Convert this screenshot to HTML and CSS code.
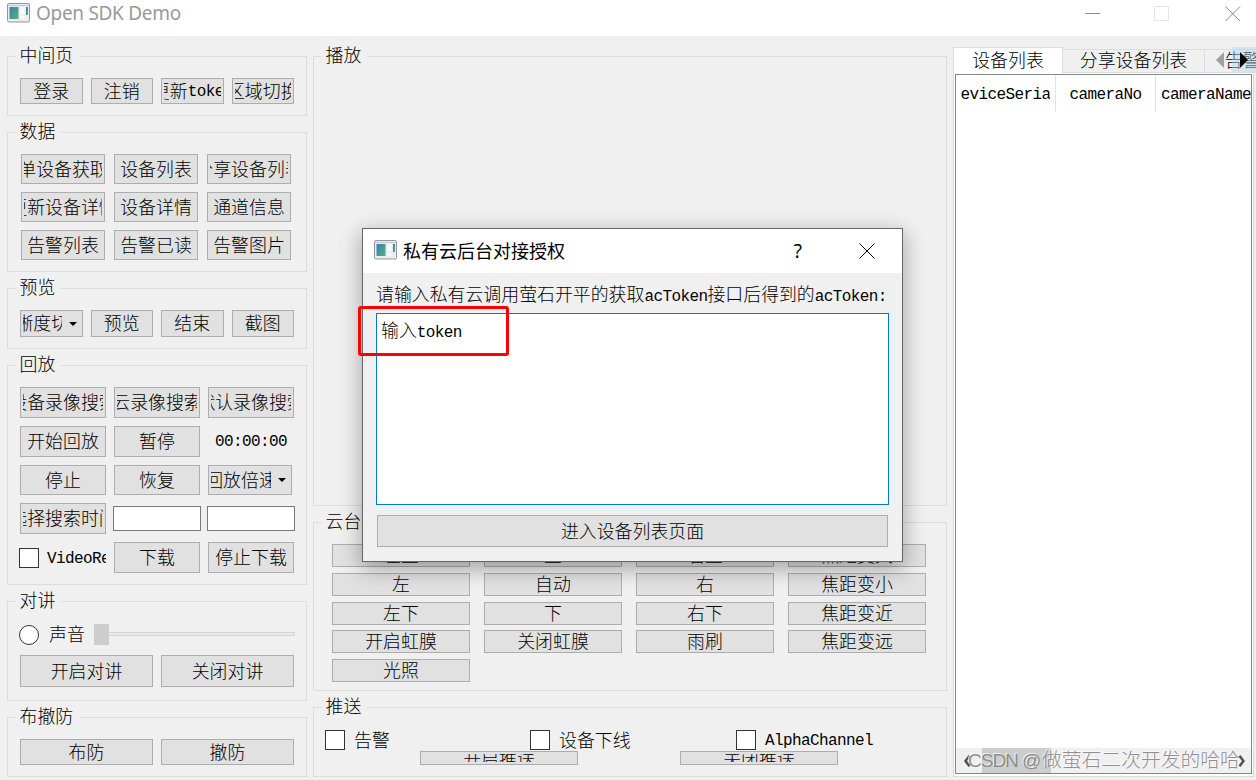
FILE: index.html
```html
<!DOCTYPE html>
<html lang="zh-CN">
<head>
    <meta charset="UTF-8">
    <title>Open SDK Demo</title>
    <link rel="stylesheet" href="styles.css">
</head>
<body>
<!-- 标题栏 -->
<div class="titlebar">
    <svg class="app-icon" width="23" height="20" viewBox="0 0 23 20">
        <defs>
            <linearGradient id="scr" x1="0" y1="0" x2="1" y2="1">
                <stop offset="0" stop-color="#3d7fae"/>
                <stop offset="1" stop-color="#56b07c"/>
            </linearGradient>
        </defs>
        <rect x="0.5" y="0.5" width="22" height="18.5" rx="1.5" fill="#e9ecf0" stroke="#8f969f"/>
        <path d="M1.5 2.5h20" stroke="#c4c9d0"/>
        <rect x="2.5" y="4" width="9" height="12" fill="url(#scr)"/>
        <rect x="13.5" y="4" width="4" height="7" fill="#fafafa"/>
        <rect x="13.5" y="12.5" width="4" height="3.5" fill="#f8f8f8"/>
        <rect x="19" y="4" width="2" height="8" fill="url(#scr)"/>
    </svg>
    <span class="app-name">Open SDK Demo</span>
    <svg class="win-btns" width="156" height="16" viewBox="0 0 156 16">
        <path d="M0 7.5h15" stroke="#8c8c8c" fill="none"/>
        <rect x="69.5" y="0.5" width="14" height="14" stroke="#e6e6e6" fill="none"/>
        <path d="M140.500 0.500l14.500 14.500M155 0.500L140.500 15" stroke="#8c8c8c" fill="none"/>
    </svg>
</div>

<div class="main">
    <!-- 左侧功能区 -->
    <div class="left">
        <div class="group h60">
            <div class="title">中间页</div>
            <div class="row4">
                <div class="btn">登录</div>
                <div class="btn">注销</div>
                <div class="btn">更新<span class="en">token</span></div>
                <div class="btn">区域切换</div>
            </div>
        </div>
        <div class="group h140">
            <div class="title">数据</div>
            <div class="data">
                <div class="btn">单设备获取</div>
                <div class="btn">设备列表</div>
                <div class="btn">分享设备列表</div>
                <div class="btn">更新设备详情</div>
                <div class="btn">设备详情</div>
                <div class="btn">通道信息</div>
                <div class="btn">告警列表</div>
                <div class="btn">告警已读</div>
                <div class="btn">告警图片</div>
            </div>
        </div>
        <div class="group h61">
            <div class="title">预览</div>
            <div class="row4 preview">
                <div class="combo"><div class="text">清晰度切换</div><i class="arrow"></i></div>
                <div class="btn">预览</div>
                <div class="btn">结束</div>
                <div class="btn">截图</div>
            </div>
        </div>
        <div class="group h220">
            <div class="title">回放</div>
            <div class="playback">
                <div class="btn">设备录像搜索</div>
                <div class="btn">云录像搜索</div>
                <div class="btn">默认录像搜索</div>
                <div class="btn">开始回放</div>
                <div class="btn">暂停</div>
                <div class="time en">00:00:00</div>
                <div class="btn">停止</div>
                <div class="btn">恢复</div>
                <div class="combo speed"><div class="text">回放倍速</div><i class="arrow"></i></div>
                <div class="btn">选择搜索时间</div>
                <div class="edit"></div>
                <div class="edit"></div>
                <div class="check"><i class="box"></i><span class="en">VideoRecord</span></div>
                <div class="btn">下载</div>
                <div class="btn">停止下载</div>
            </div>
        </div>
        <div class="group h100">
            <div class="title">对讲</div>
            <div class="voice">
                <i class="radio"></i>
                <span class="voice-name">声音</span>
                <i class="handle"></i>
                <i class="track"></i>
            </div>
            <div class="row2 talk">
                <div class="btn">开启对讲</div>
                <div class="btn">关闭对讲</div>
            </div>
        </div>
        <div class="group h60">
            <div class="title">布撤防</div>
            <div class="row2">
                <div class="btn">布防</div>
                <div class="btn">撤防</div>
            </div>
        </div>
    </div>

    <!-- 中间播放区 -->
    <div class="center">
        <div class="group h450">
            <div class="title">播放</div>
        </div>
        <div class="group h169">
            <div class="title">云台控制</div>
            <div class="ptz">
                <div class="btn">左上</div>
                <div class="btn">上</div>
                <div class="btn">右上</div>
                <div class="btn">焦距变大</div>
                <div class="btn">左</div>
                <div class="btn">自动</div>
                <div class="btn">右</div>
                <div class="btn">焦距变小</div>
                <div class="btn">左下</div>
                <div class="btn">下</div>
                <div class="btn">右下</div>
                <div class="btn">焦距变近</div>
                <div class="btn">开启虹膜</div>
                <div class="btn">关闭虹膜</div>
                <div class="btn">雨刷</div>
                <div class="btn">焦距变远</div>
                <div class="btn">光照</div>
            </div>
        </div>
        <div class="group h70">
            <div class="title">推送</div>
            <div class="push-checks">
                <div class="check"><i class="box"></i><span>告警</span></div>
                <div class="check"><i class="box"></i><span>设备下线</span></div>
                <div class="check"><i class="box"></i><span class="en">AlphaChannel</span></div>
            </div>
            <div class="push-btns">
                <div class="btn">开启推送</div>
                <div class="btn">关闭推送</div>
            </div>
        </div>
    </div>

    <!-- 右侧列表 -->
    <div class="right">
        <div class="tabs">
            <div class="tab select">设备列表</div>
            <div class="tab tab2">分享设备列表</div>
            <div class="tab tab3">告警列表</div>
            <div class="scroller">
                <svg width="8" height="16" viewBox="0 0 8 16"><path d="M8 0v16L0 8z" fill="#a0a0a0"/></svg>
                <div class="next"><svg width="8" height="16" viewBox="0 0 8 16"><path d="M0 0v16L8 8z" fill="#000"/></svg></div>
            </div>
        </div>
        <div class="pane">
            <div class="table">
                <div class="thead">
                    <div class="th"><span class="en">deviceSerial</span></div>
                    <div class="th"><span class="en">cameraNo</span></div>
                    <div class="th"><span class="en">cameraName</span></div>
                </div>
                <div class="scrollbar">
                    <svg width="7" height="12" viewBox="0 0 7 12"><path d="M5.500 0.800L1.500 6l4 5.200" fill="none" stroke="#505050" stroke-width="2.500"/></svg>
                    <i class="thumb"></i>
                    <svg width="7" height="12" viewBox="0 0 7 12"><path d="M1.500 0.800L5.500 6l-4 5.200" fill="none" stroke="#505050" stroke-width="2.500"/></svg>
                    <div class="mark"><span class="mark-en">CSDN @</span>做萤石二次开发的哈哈</div>
                </div>
            </div>
        </div>
    </div>
</div>

<!-- 授权弹窗 -->
<div class="dialog">
    <div class="dialog-head">
        <svg class="app-icon" width="23" height="20" viewBox="0 0 23 20">
            <rect x="0.5" y="0.5" width="22" height="18.5" rx="1.5" fill="#e9ecf0" stroke="#8f969f"/>
            <path d="M1.500 2.500h20" stroke="#c4c9d0"/>
            <rect x="2.5" y="4" width="9" height="12" fill="url(#scr)"/>
            <rect x="13.5" y="4" width="4" height="7" fill="#fafafa"/>
            <rect x="13.5" y="12.5" width="4" height="3.5" fill="#f8f8f8"/>
            <rect x="19" y="4" width="2" height="8" fill="url(#scr)"/>
        </svg>
        <span class="dialog-name">私有云后台对接授权</span>
        <span class="help">?</span>
        <svg width="16" height="16" viewBox="0 0 16 16"><path d="M0.500 0.500l15 15M15.500 0.500l-15 15" stroke="#000" fill="none"/></svg>
    </div>
    <div class="dialog-body">
        <div class="tip">请输入私有云调用萤石开平的获取<span class="en">acToken</span>接口后得到的<span class="en">acToken:</span></div>
        <div class="input">输入<span class="en">token</span></div>
        <div class="btn enter">进入设备列表页面</div>
    </div>
</div>
<div class="redbox"></div>
</body>
</html>
```

FILE: styles.css
```css
* { margin: 0; padding: 0; box-sizing: border-box; }
body {
    width: 1256px;
    height: 780px;
    overflow: hidden;
    position: relative;
    background: #f0f0f0;
    color: #000;
    font: 300 17.9px/20px "Noto Sans CJK SC", sans-serif;
    white-space: nowrap;
}
i { font-style: normal; display: block; flex: none; }
svg { display: block; flex: none; }
.en {
    font-family: "Liberation Mono", monospace;
    font-size: 16px;
    font-weight: 400;
    line-height: 1;
    letter-spacing: -0.6px;
}

/* 标题栏 */
.titlebar {
    display: flex;
    height: 36px;
    padding: 3px 15px 0 7px;
    background: #fff;
}
.app-name {
    margin-left: 6px;
    line-height: 20px;
    font-family: "Noto Sans", sans-serif;
    font-size: 19px;
    letter-spacing: -0.3px;
    font-weight: 400;
    color: #999;
}
.win-btns { margin: 3px 0 0 auto; }

.main { display: flex; height: 744px; padding: 20px 0 0 7px; }
.left { width: 300px; }
.center { width: 634px; margin-left: 6px; }

/* 分组框 */
.group { border: 1px solid #dcdcdc; margin-bottom: 16px; padding: 0 12px; }
.title {
    width: max-content;
    height: 20px;
    margin: -11px 0 12px -5px;
    padding: 0 6px 0 4.5px;
    line-height: 17px;
    background: #f0f0f0;
}
.h60 { height: 60px; }
.h61 { height: 61px; }
.h70 { height: 70px; padding: 0 11px; }
.h100 { height: 100px; }
.h140 { height: 140px; }
.h169 { height: 169px; }
.h220 { height: 220px; }
.h450 { height: 450px; }
.h70 .title { margin-left: -4px; }

.btn {
    display: flex;
    align-items: center;
    justify-content: center;
    min-width: 0;
    min-height: 0;
    padding: 0 2px 3px;
    border: 1px solid #adadad;
    background: #e1e1e1;
    overflow: clip;
    overflow-clip-margin: content-box;
}
.btn .en { margin-top: 4px; }
.combo {
    display: flex;
    align-items: center;
    min-width: 0;
    padding: 0 5px 0 2px;
    border: 1px solid #adadad;
    background: #e1e1e1;
}
.combo .text {
    flex: 1;
    display: flex;
    justify-content: center;
    min-width: 0;
    margin: 0 7px 3px 0;
    overflow: hidden;
}
.arrow { border: 4px solid transparent; border-top-color: #000; border-bottom: 0; }

.row4 { display: grid; grid-template-columns: repeat(4, 62.5px); gap: 8px; height: 26px; }
.preview { height: 27px; }
.row2 { display: grid; grid-template-columns: 1fr 1fr; gap: 8px; height: 26px; }
.talk { height: 32px; }
.data {
    display: grid;
    grid-template-columns: repeat(3, 84px);
    grid-template-rows: repeat(3, 30px);
    gap: 8px 9px;
    padding-left: 1px;
}
.playback {
    display: grid;
    grid-template-columns: repeat(3, 86px);
    grid-template-rows: 31px 31px 30px 31px 31px;
    gap: 8px;
}
.time { line-height: 32px; text-align: center; }
.speed { width: 84px; }
.edit { height: 25px; margin: 3px -1px; border: 1px solid #7a7a7a; background: #fff; }
.check { display: flex; align-items: center; min-width: 0; overflow: hidden; }
.check span { margin-top: -3px; }
.check .en { margin-top: 2px; }
.box { width: 20px; height: 20px; margin-right: 9px; border: 1px solid #333; background: #fff; }
.playback .check { margin-left: -1px; }
.playback .box { margin-right: 8px; }

.voice { display: flex; align-items: center; height: 21px; margin: 0 -1px 10px; }
.title + .voice { margin-top: 13px; }
.radio { width: 20px; height: 20px; border: 1px solid #333; border-radius: 50%; background: #fff; }
.voice-name { width: 55px; margin-top: -3px; padding-left: 10px; }
.handle { width: 15px; height: 21px; background: #cdcdcd; }
.track { width: 186px; height: 4px; margin-bottom: 1px; border: 1px solid #d6d6d6; border-left: 0; background: #e7eaea; }

.ptz {
    display: grid;
    grid-template-columns: repeat(4, 138px);
    grid-auto-rows: 23px;
    gap: 5.75px 14px;
    padding-left: 6px;
}
.ptz .btn { align-items: flex-start; padding-bottom: 0; line-height: 18px; }
.push-checks { display: grid; grid-template-columns: 205px 206px 205px; height: 22px; }
.push-btns { display: flex; gap: 102px; padding-left: 95px; }
.push-btns .btn { width: 158px; height: 14px; padding: 2px; }

/* 右侧选项卡 */
.right { width: 303px; margin: -9px 0 0 6px; overflow: hidden; }
.tabs { display: flex; align-items: flex-end; height: 26px; position: relative; overflow: hidden; }
.tab {
    flex: none;
    height: 24px;
    border: 1px solid #dcdcdc;
    border-left: 0;
    text-align: center;
    line-height: 19px;
}
.tab.select { width: 110px; height: 26px; border-left: 1px solid #dcdcdc; border-bottom: 0; background: #fff; line-height: 22px; }
.tab2 { width: 142px; }
.tab3 { width: 112px; }
.scroller { display: flex; align-items: center; position: absolute; right: 0; top: 0; height: 25px; width: 40px; }
.next { display: flex; align-items: center; width: 24px; height: 25px; margin-left: 8px; padding-left: 8px; background: rgba(176, 214, 240, .45); }
.pane { width: 301px; height: 704px; padding: 1px; border: 1px solid #dcdcdc; border-top: 0; background: #fff; }
.table { display: flex; flex-direction: column; justify-content: space-between; width: 297px; height: 700px; border: 1px solid #828790; }
.thead { display: flex; height: 37px; overflow: hidden; }
.th {
    display: flex;
    flex: none;
    align-items: center;
    justify-content: center;
    width: 100px;
    padding: 2px 5px 0;
    border-right: 1px solid #e2e2e2;
    overflow: clip;
    overflow-clip-margin: content-box;
}
.th:last-child { border-right: 0; }
.scrollbar { display: flex; align-items: center; position: relative; height: 25px; padding: 0 6px 0 8px; background: #f0f0f0; overflow: hidden; }
.thumb { width: 69px; height: 25px; margin: 0 auto 0 11px; background: #cdcdcd; }
.mark {
    position: absolute;
    left: 12px;
    top: 0;
    line-height: 22px;
    font-size: 19.8px;
    color: rgba(130, 130, 130, .9);
    text-shadow: -1px -1px 0 rgba(255, 255, 255, .7);
}
.mark-en { display: inline-block; width: 74px; font-family: "Liberation Sans", sans-serif; font-size: 19px; letter-spacing: -1px; }

/* 弹窗 */
.dialog {
    position: absolute;
    left: 362px;
    top: 228px;
    width: 541px;
    height: 334px;
    border: 1px solid #666;
    background: #f0f0f0;
    box-shadow: 0 6px 20px 1px rgba(0, 0, 0, .32);
}
.dialog-head { display: flex; align-items: center; height: 44px; padding: 0 27px 0 11px; background: #fff; }
.dialog-head .app-icon { margin-bottom: 2px; }
.dialog-name { margin: 0 0 3px 6px; font-size: 18px; font-weight: 400; }
.help { margin: 0 57px 0 auto; font-family: "Noto Sans", sans-serif; font-weight: 400; font-size: 19px; }
.dialog-body { padding: 10px 13px 0; }
.tip { height: 22px; margin-bottom: 8px; }
.input { height: 192px; padding: 5px 4px; border: 1px solid #0078d7; background: #fff; }
.enter { height: 32px; margin: 10px 1px 0; }
.redbox {
    position: absolute;
    left: 358px;
    top: 306px;
    width: 151px;
    height: 50px;
    border: 3px solid #f00;
    border-radius: 3px;
}
```
